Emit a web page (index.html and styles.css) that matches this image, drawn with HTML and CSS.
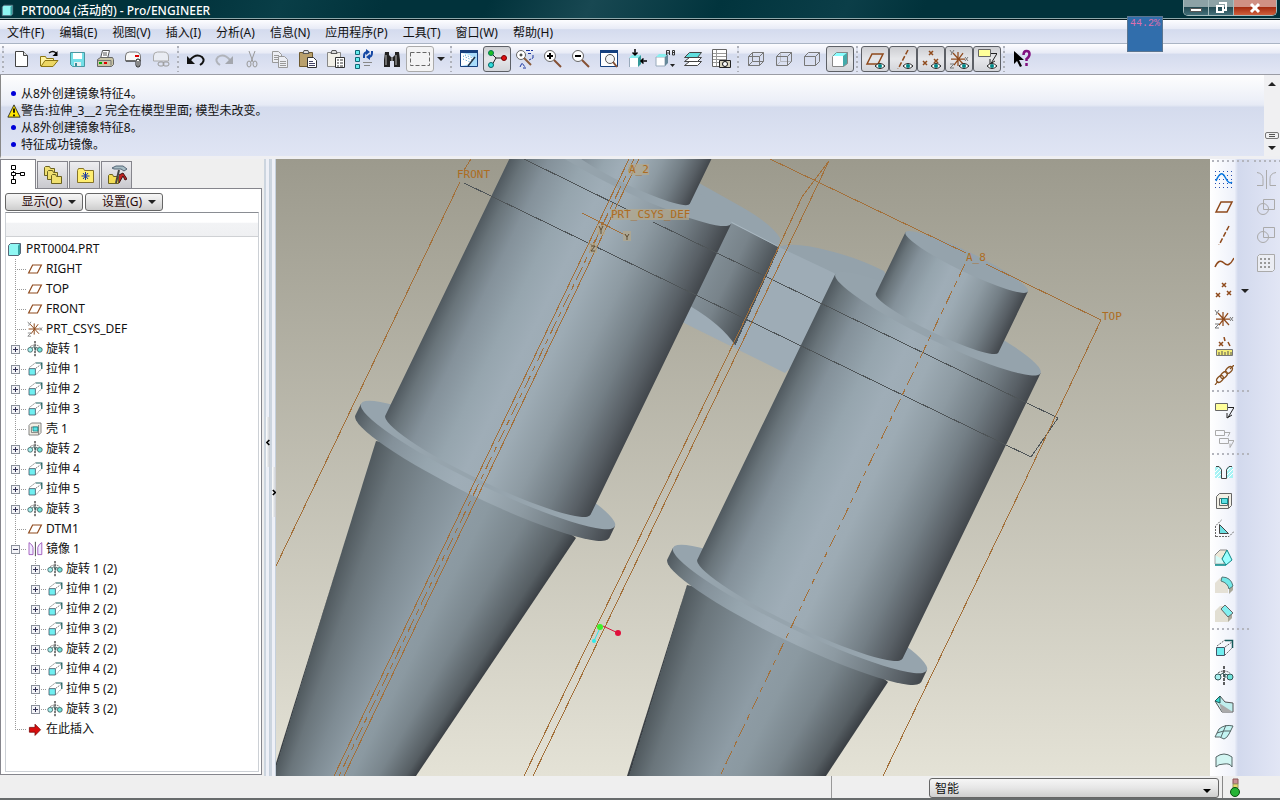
FILE: index.html
```html
<!DOCTYPE html>
<html lang="zh-CN">
<head>
  <meta charset="UTF-8">
  <meta name="viewport" content="width=device-width, initial-scale=1.0">
  <title>PRT0004 (活动的) - Pro/ENGINEER</title>
  <link rel="stylesheet" href="styles.css">
</head>
<body>

  <!-- 图标库 -->
  <svg class="sprite" aria-hidden="true">
    <symbol id="i-new" viewBox="0 0 20 20"><path d="M4.500 2.500h8l4 4v11h-12z" fill="#fff" stroke="#444"/><path d="M12.500 2.500v4h4" fill="#ddd" stroke="#444"/></symbol>
    <symbol id="i-open" viewBox="0 0 20 20"><path d="M1.500 17V7.500h5l1 2h7v3" fill="#fff3a0" stroke="#8b7512"/><path d="M2 17.500l4-6h13l-5 6z" fill="#ecd662" stroke="#8b7512"/><path d="M10 4q4-3 7 0" fill="none" stroke="#111" stroke-width="1.500"/><path d="M18.500 2v5h-5z"/></symbol>
    <symbol id="i-save" viewBox="0 0 20 20"><path d="M3.500 3.500h14v14h-12l-2-2z" fill="#74dfe8" stroke="#4a97a0"/><path d="M6 4h9v6H6z" fill="#fff"/><path d="M7 13h7v4H7z" fill="#e8eef0"/><path d="M8 14h2v3H8z" fill="#3a8b98"/></symbol>
    <symbol id="i-print" viewBox="0 0 20 20"><path d="M7.500 1.500h7l-2 8h-7z" fill="#fff" stroke="#555"/><path d="M8 4h4M8 6h4" stroke="#555"/><path d="M2.500 10.500l3-2h12l1 2v5l-2 2h-14z" fill="#c9c4a5" stroke="#666"/><path d="M3 11.500h13v5" fill="none" stroke="#777"/><path d="M4 14h3" stroke="#0a0" stroke-width="2"/><path d="M9 14h3" stroke="#d00" stroke-width="2"/></symbol>
    <symbol id="i-mail" viewBox="0 0 20 20"><path d="M2.500 12V7q0-4 4-4h6q5 0 5 5v4z" fill="#f8f8f8" stroke="#777"/><path d="M3 12h9" stroke="#222"/><path d="M12 7h4" stroke="#d00" stroke-width="2"/><rect x="13" y="10" width="4" height="8" rx="2" fill="#fff" stroke="#111"/><path d="M15 12v5" stroke="#111"/></symbol>
    <symbol id="i-maillink" viewBox="0 0 20 20"><path d="M2.500 12V7q0-4 4-4h6q5 0 5 5v4z" fill="#e9ecf3" stroke="#aaa"/><rect x="7" y="13" width="6" height="4" rx="2" fill="none" stroke="#999"/><rect x="12" y="13" width="6" height="4" rx="2" fill="none" stroke="#999"/></symbol>
    <symbol id="i-undo" viewBox="0 0 20 20"><path d="M4 11q6-7 12-3 4 4-2 8" fill="none" stroke="#111" stroke-width="2"/><path d="M1 7v8h8z" fill="#111"/></symbol>
    <symbol id="i-redo" viewBox="0 0 20 20"><path d="M16 11Q10 4 4 8q-4 4 2 8" fill="none" stroke="#b0b3ba" stroke-width="2"/><path d="M19 7v8h-8z" fill="#a4a7ae"/></symbol>
    <symbol id="i-cut" viewBox="0 0 20 20" fill="none" stroke="#999"><path d="M7 2l4 11M13 2L9 13"/><ellipse cx="7" cy="15" rx="2" ry="3"/><ellipse cx="13" cy="15" rx="2" ry="3"/></symbol>
    <symbol id="i-copy" viewBox="0 0 20 20" fill="#eceef4" stroke="#999"><path d="M2.500 2.500h6l3 3v8h-9z"/><path d="M8.500 7.500h6l3 3v8h-9z"/><path d="M4 6.500h5M4 8.500h4M4 10.500h4M10 12.500h6M10 14.500h6M10 16.500h6"/></symbol>
    <symbol id="i-paste" viewBox="0 0 20 20"><path d="M1.500 3.500h13v14h-13z" fill="#b9a06c" stroke="#6e5a30"/><path d="M5 4.500l1-3h4l1 3z" fill="#ddd" stroke="#555"/><path d="M9.500 8.500h6l3 3v7h-9z" fill="#fff" stroke="#333"/><path d="M11 12.500h4M11 14.500h6M11 16.500h6" stroke="#446"/></symbol>
    <symbol id="i-pastesp" viewBox="0 0 20 20"><path d="M1.500 3.500h13v14h-13z" fill="#f2f0e8" stroke="#888"/><path d="M5 4.500l1-3h4l1 3z" fill="#ddd" stroke="#555"/><path d="M9.500 8.500h9v10h-9z" fill="#fff" stroke="#333"/><path d="M11 11h2M11 14h2M11 17h2M14 11h3M14 14h3M14 17h3" stroke="#333"/></symbol>
    <symbol id="i-regen" viewBox="0 0 20 20"><path d="M1.500 1.500h4v4h-4zM1.500 8.500h4v4h-4zM1.500 15.500h4v4h-4z" fill="#6ee" stroke="#167"/><path d="M10 9V7q0-4 4-4M18 2v2q0 4-4 4" fill="none" stroke="#1548a5" stroke-width="2"/><path d="M12 0l4 3-4 3zM16 5l-4 3 4 3z" fill="#1548a5"/><path d="M9 13.500h9M10 16.500h6" stroke="#888"/></symbol>
    <symbol id="i-find" viewBox="0 0 20 20"><path d="M3 3h4v3l2 2h2l2-2V3h4l1 8v7h-6v-6H8v6H2v-7z" fill="#222"/><path d="M4 6v10M14 6v10" stroke="#bbb"/><path d="M9 8h2v4H9z" fill="#777"/></symbol>
    <symbol id="i-select" viewBox="0 0 20 20"><path d="M.5 3.500h19v13H.5z" fill="none" stroke="#666" stroke-dasharray="4 2"/></symbol>
    <symbol id="i-repaint" viewBox="0 0 20 20"><path d="M1.500 1.500h17v16h-17z" fill="#a9dcfb" stroke="#16407e"/><path d="M1 1h18v3H1z" fill="#16407e"/><path d="M2 4q10 1 13 6l-4 5-9 2z" fill="#fff"/><path d="M4 7l9 4M4 10l7 3M6 6l8 3" stroke="#2d8cc8" stroke-dasharray="1 2"/><path d="M9 17l7-9" stroke="#234" stroke-width="1.500"/></symbol>
    <symbol id="i-spin" viewBox="0 0 20 20"><path d="M4 4l5 5-4 7M9 9h9" fill="none" stroke="#222"/><circle cx="4" cy="4" r="2.500" fill="#1fbf1f" stroke="#075"/><circle cx="17" cy="9" r="2.500" fill="#e01010" stroke="#700"/><circle cx="4" cy="16" r="2.500" fill="#3dd" stroke="#066"/></symbol>
    <symbol id="i-orient" viewBox="0 0 20 20"><circle cx="6" cy="6" r="4.500" fill="#fff" stroke="#666"/><path d="M4.500 6h3M6 4.500v3" stroke="#111"/><path d="M9 9l7 7" stroke="#8a5a3a" stroke-width="2"/><path d="M11 1.500h7M13 4.500h3M18 6v3l-4 2M5 18l2-4 3 4M8 19h3" fill="none" stroke="#1c36a0" stroke-dasharray="4 1"/></symbol>
    <symbol id="i-zoomin" viewBox="0 0 20 20"><circle cx="7" cy="7" r="5.500" fill="#fff" stroke="#666"/><path d="M4 7h6M7 4v6" stroke="#000" stroke-width="2"/><path d="M11 11l7 7" stroke="#855033" stroke-width="2"/></symbol>
    <symbol id="i-zoomout" viewBox="0 0 20 20"><circle cx="7" cy="7" r="5.500" fill="#fff" stroke="#666"/><path d="M4 7h6" stroke="#000" stroke-width="2"/><path d="M11 11l7 7" stroke="#855033" stroke-width="2"/></symbol>
    <symbol id="i-refit" viewBox="0 0 20 20"><path d="M1.500 1.500h17v16h-17z" fill="#fff" stroke="#16407e"/><path d="M1 1h18v3H1z" fill="#16407e"/><circle cx="11" cy="10" r="4.500" fill="#f5f5f5" stroke="#555"/><path d="M14 13l4 5" stroke="#855033" stroke-width="2"/></symbol>
    <symbol id="i-reorient" viewBox="0 0 20 20"><path d="M2 9h9v9H2z" fill="#fff"/><path d="M2 9l3-3h9l-3 3z" fill="#8ee"/><path d="M11 9l3-3v9l-3 3z" fill="#399"/><path d="M2.500 18V9" stroke="#9ab"/><path d="M8 0v6M5.500 3.500L8 6l2.500-2.500M20 12h-6M16.500 9.500L14 12l2.500 2.500" fill="none" stroke="#000" stroke-width="1.500"/></symbol>
    <symbol id="i-views" viewBox="0 0 20 20"><path d="M1 8h9v9H1z" fill="#fff" stroke="#9ab"/><path d="M1 8l3-3h9l-3 3z" fill="#8ee"/><path d="M10 8l3-3v9l-3 3z" fill="#689"/><path d="M11.500 6V1.500h3V6M11.500 4h3M17.500 6V1.500h2V6h-2M17.500 3.500h2" fill="none" stroke="#333"/><path d="M15 15h5l-2.500 3z" fill="#222"/></symbol>
    <symbol id="i-layers" viewBox="0 0 20 20" stroke="#444"><path d="M1.500 16.500l5-4h12l-4 4z" fill="#fff"/><path d="M1.500 12.500l5-4h12l-4 4z" fill="#fff"/><path d="M1.500 8.500l5-5h12l-4 5z" fill="#5fdede"/></symbol>
    <symbol id="i-viewmgr" viewBox="0 0 20 20"><path d="M1.500 .5h14v17h-14z" fill="#fff" stroke="#666"/><path d="M2 4.500h13M2 7.500h13M2 10.500h13M2 13.500h13M5.500 1v16" stroke="#999"/><path d="M8.500 11.500h11v7h-11z" fill="#d7d2bd" stroke="#222"/><circle cx="14" cy="15" r="2.500" fill="#fff" stroke="#111"/></symbol>
    <symbol id="i-wire" viewBox="0 0 20 20" fill="none" stroke="#777"><path d="M2.500 7.500h11v9h-11zM6.500 3.500h11v9h-11zM2.500 7.500l4-4M13.500 7.500l4-4M2.500 16.500l4-4M13.500 16.500l4-4"/></symbol>
    <symbol id="i-hidden" viewBox="0 0 20 20" fill="none" stroke="#777"><path d="M6.500 3.500v9h11M2.500 16.500l4-4" stroke="#b5b8c0"/><path d="M2.500 7.500h11v9h-11zM2.500 7.500l4-4h11v9l-4 4M13.500 7.500l4-4"/></symbol>
    <symbol id="i-nohid" viewBox="0 0 20 20" fill="none" stroke="#777"><path d="M2.500 7.500h11v9h-11zM2.500 7.500l4-4h11v9l-4 4M13.500 7.500l4-4"/></symbol>
    <symbol id="i-part" viewBox="0 0 20 20"><path d="M2 7h11v11H2z" fill="#fff"/><path d="M2 7l4-4h12l-5 4z" fill="#8ff"/><path d="M13 7l5-4v11l-5 4z" fill="#4aa"/><path d="M2.500 7.500l4-4h11v11l-4 3h-11z" fill="none" stroke="#888"/></symbol>
    <symbol id="i-root" viewBox="0 0 16 16"><path d="M2.500 4.500l2-2h10v10l-2 2h-10z" fill="#8ff7f3" stroke="#567"/><path d="M12 4.500l2-2v10l-2 2z" fill="#36a0a0"/></symbol>
    <symbol id="i-eye" viewBox="0 0 10 6"><path d="M0 3q5-5 10 0-5 5-10 0z" fill="#fff" stroke="#222"/><circle cx="5" cy="3" r="2" fill="#088"/></symbol>
    <symbol id="i-plane" viewBox="0 0 20 20"><path d="M2 15L7 5h11l-5 10z" fill="none" stroke="#8f4a1c" stroke-width="1.500"/></symbol>
    <symbol id="i-axis" viewBox="0 0 20 20"><path d="M15 1L5 20" stroke="#8f4a1c" stroke-width="1.500" stroke-dasharray="5 2"/></symbol>
    <symbol id="i-points" viewBox="0 0 20 20"><path d="M8 2l4 4M12 2L8 6M2 12l4 4M6 12l-4 4M13 10l4 4M17 10l-4 4" stroke="#8f4a1c" stroke-width="1.500"/></symbol>
    <symbol id="i-csys" viewBox="0 0 20 20" fill="none"><path d="M9 3v14M2 10h14M4 4l11 12M14 4L5 16" stroke="#8f4a1c" stroke-width="1.250"/><path d="M1 1l2 3 2-3M3 4L2 6M16 8l3 4M19 8l-3 4M1 15h4l-4 4h4" stroke="#777"/></symbol>
    <symbol id="i-note" viewBox="0 0 20 20"><path d="M1.500 3.500h12v7h-12z" fill="#ffff9a" stroke="#666"/><path d="M14 7.500h6l-6 10M13 13v5l5-3" fill="none" stroke="#222"/></symbol>
    <symbol id="i-notes" viewBox="0 0 20 20"><path d="M1.500 2.500h9v5h-9zM5.500 10.500h9v5h-9zM11 4.500h5l-2 4M15 12.500h5l-4 7v-4" fill="none" stroke="#aaa"/></symbol>
    <symbol id="i-help" viewBox="0 0 20 20"><path d="M2 2v13l3-3 3 6 2-1-3-6h5z"/><path d="M11.500 6q0-4 3-4t3 3-3 5v2M14.500 14v3" fill="none" stroke="#80107f" stroke-width="2.500"/></symbol>
    <symbol id="i-sketch" viewBox="0 0 20 20"><path d="M1 2.500h18M1 6.500h18M1 10.500h18M1 14.500h18M1 18.500h18" stroke="#2850b0" stroke-dasharray="1 3"/><path d="M2 12Q7 0 11 8t7 5" fill="none" stroke="#0a78e0" stroke-width="1.500"/></symbol>
    <symbol id="i-curve" viewBox="0 0 20 20"><path d="M1 14Q5 5 10 10t10-5" fill="none" stroke="#8f4a1c" stroke-width="1.500"/></symbol>
    <symbol id="i-ruler" viewBox="0 0 20 20"><path d="M5 5l4 4M9 5L5 9M10 0l1 4M14 5l2 4" stroke="#8f4a1c" stroke-width="1.500"/><path d="M2.500 12.500h16v6h-16z" fill="#f4ee78" stroke="#777"/><path d="M5 18v-3M8 18v-4M11 18v-3M14 18v-4M17 18v-3" stroke="#555"/></symbol>
    <symbol id="i-chain" viewBox="0 0 20 20" fill="none" stroke="#87501f" stroke-width="1.250"><path d="M1 20l3-4M16 4l4-4"/><ellipse cx="6" cy="14" rx="4" ry="2.500" transform="rotate(-45 6 14)"/><ellipse cx="10" cy="10" rx="4" ry="2.500" transform="rotate(-45 10 10)"/><ellipse cx="15" cy="5" rx="4" ry="2.500" transform="rotate(-45 15 5)"/></symbol>
    <symbol id="i-hole" viewBox="0 0 20 20"><path d="M1 4h5l2 3v8H1zM19 4h-5l-2 3v8h7z" fill="#a8f3f5"/><path d="M1 9l5-5M1 13l6-6M3 15l4-4M13 8l4-4M13 12l6-6M14 15l5-5" stroke="#fff"/><path d="M2 3.500h3l2.500 3v9h5v-9l2.500-3h3" fill="none" stroke="#444"/></symbol>
    <symbol id="i-shell" viewBox="0 0 20 20"><path d="M2.500 5.500l3-3h12v12l-3 3h-12z" fill="#f2f0e6" stroke="#666"/><path d="M5.500 7.500h8v7h-8zM14.500 5v12" fill="none" stroke="#666"/><path d="M7.500 7.500h6v5h-6z" fill="#5de0e4" stroke="#188"/></symbol>
    <symbol id="i-rib" viewBox="0 0 20 20"><path d="M1.500 18V7l6-6M2 17.500h13l5-5" fill="none" stroke="#666" stroke-dasharray="2 1"/><path d="M5.500 5.500l9 9h-9z" fill="#6cdfe2" stroke="#444"/></symbol>
    <symbol id="i-draft" viewBox="0 0 20 20"><path d="M1 8h9v9H1z" fill="#d5fbf8" stroke="#aaa"/><path d="M1 8l5-5h7l-5 9" fill="#eee8d8" stroke="#888"/><path d="M8 12l5-9 5 10-6 5z" fill="#9ff" stroke="#188"/><path d="M1 18h11" stroke="#088" stroke-width="1.500"/></symbol>
    <symbol id="i-round" viewBox="0 0 20 20"><path d="M1 8l5-5h6l7 9v3l-4 3V14H14v4H1z" fill="#e5e1d6"/><path d="M15 13l4-2v4l-4 4z" fill="#aaa899"/><path d="M8 2q9 0 11 9l-4 3q-1-6-8-8z" fill="#72e8e8" stroke="#577"/></symbol>
    <symbol id="i-chamfer" viewBox="0 0 20 20"><path d="M1 8l5-5h5l7 8v4l-4 4H1z" fill="#e2dfd3"/><path d="M14 13l4-3v5l-4 4z" fill="#aaa899"/><path d="M7 6l4-4 8 8-5 4z" fill="#82eff0" stroke="#666"/></symbol>
    <symbol id="i-extrude" viewBox="0 0 20 20"><path d="M2.500 9.500h8v8h-8z" fill="#70eef0" stroke="#456"/><path d="M3 8l8-6M11 9l7-5M11 17l7-7" stroke="#666" stroke-dasharray="2 1"/><path d="M11 2.500h7.500V10" fill="none" stroke="#145a5a" stroke-width="1.500"/></symbol>
    <symbol id="i-revolve" viewBox="0 0 20 20"><path d="M10 0v20" stroke="#000" stroke-width="1.250" stroke-dasharray="3 1"/><path d="M4 7q6-4 12 0" fill="none" stroke="#555" stroke-dasharray="2 1"/><path d="M6 9l3-2 2 4M14 9l-3-1v4" fill="none" stroke="#355"/><circle cx="4" cy="11" r="3" fill="#a6f0f0" stroke="#355"/><circle cx="16" cy="11" r="3" fill="#70e4dc" stroke="#355"/></symbol>
    <symbol id="i-sweep" viewBox="0 0 20 20"><path d="M1 7l5-5 5 6 8 1v9H8z" fill="#bfeeed" stroke="#555"/><path d="M1 7l5-5v7z" fill="#36dbd0" stroke="#255"/><path d="M5 9l14 9H8z" fill="#aaa"/></symbol>
    <symbol id="i-bound" viewBox="0 0 20 20"><path d="M1 15L5 7q6-5 14-3l-4 8q-2 4-5 5-4-3-9-2z" fill="#c3f3f2" stroke="#566"/><path d="M3 11q6-3 14-2M12 3L7 15" fill="none" stroke="#566"/></symbol>
    <symbol id="i-surf" viewBox="0 0 20 20"><path d="M2 17V7q8-6 16 0v10q-2-4-8-3-6 0-8 3z" fill="#d2f5f2" stroke="#566"/></symbol>
    <symbol id="i-mirror" viewBox="0 0 20 20" fill="none"><path d="M10.500 1v18" stroke="#222"/><path d="M2.500 2v15h5V8q-1-4-5-6zM18.500 2v15h-5V8q1-4 5-6z" fill="#f0ecff" stroke="#9444b4"/></symbol>
    <symbol id="i-mirrorg" viewBox="0 0 20 20" fill="none" stroke="#aaa"><path d="M10.500 1v19M1 3.500q6 1 6 6v7H1M20 3.500q-6 1-6 6v7h6"/></symbol>
    <symbol id="i-merge" viewBox="0 0 20 20" fill="none" stroke="#aaa"><circle cx="7" cy="12" r="5.500"/><path d="M7.500 2.500h11v10h-11z"/></symbol>
    <symbol id="i-pattern" viewBox="0 0 20 20"><path d="M1.500 3.500l2-2h15v15l-2 2h-15z" fill="#ebedf3" stroke="#aaa"/><path d="M4 6h11M4 10h11M4 14h11" stroke="#999" stroke-width="2" stroke-dasharray="2 2"/></symbol>
    <symbol id="i-arrow" viewBox="0 0 20 20"><path d="M3 8h7V4l7 7-7 7v-4H3z" fill="#d80d0d" stroke="#7a0808"/></symbol>
    <symbol id="i-tree" viewBox="0 0 20 20" fill="#fff" stroke="#000"><path d="M5.500 6v8M7 8.500h7"/><path d="M3.500 .5h4v4h-4zM3.500 7.500h4v3h-4zM3.500 14.500h4v4h-4zM12.500 7.500h4v3h-4z"/></symbol>
    <symbol id="i-folders" viewBox="0 0 20 20" fill="#f0e070" stroke="#6b6220"><path d="M1.500 2.500l1-1h4l1 2h4v7h-10z"/><path d="M4.500 6.500l1-1h4l1 2h4v7h-10z"/><path d="M8.500 10.500l1-1h3l1 2h5v7h-10z"/></symbol>
    <symbol id="i-fav" viewBox="0 0 20 20"><path d="M2.500 5.500l1-2h5l1 2h9v12h-16z" fill="#ffee70" stroke="#857328"/><path d="M10.500 7v8M6.500 11h8M8 8l5 6M13 8l-5 6" stroke="#1536a4"/></symbol>
    <symbol id="i-tools" viewBox="0 0 20 20"><path d="M1.500 10.500l1-1h3l1 2h5v7h-10z" fill="#f3dd55" stroke="#6b6220"/><path d="M5 3l4-2h7l4 3-3 2-3-2H7z" fill="#a7bcc4" stroke="#567"/><path d="M12 5L9 18" stroke="#444" stroke-width="2"/><path d="M12 10l4-2 4 6-2 1-2-4-4 7" fill="#c02020" stroke="#411"/></symbol>
  </svg>

  <header class="titlebar">
    <svg class="app-icon" viewBox="0 0 16 16"><use href="#i-root"/></svg>
    <h1>PRT0004 (活动的) - Pro/ENGINEER</h1>
    <div class="window-controls">
      <button aria-label="最小化"><svg viewBox="0 0 12 12"><path d="M.5 6.500h11v3H.5z" fill="#fff" stroke="#555"/></svg></button>
      <button aria-label="还原"><svg viewBox="0 0 12 12"><path d="M4 1h7v7H9M2 4h6v6H2z" fill="none" stroke="#fff" stroke-width="2"/></svg></button>
      <button class="close" aria-label="关闭"><svg viewBox="0 0 12 12"><path d="M2 2l8 8M10 2l-8 8" stroke="#fff" stroke-width="3"/></svg></button>
    </div>
    <div class="progress">44.2%</div>
  </header>

  <nav class="menubar">
    <button>文件(F)</button>
    <button>编辑(E)</button>
    <button>视图(V)</button>
    <button>插入(I)</button>
    <button>分析(A)</button>
    <button>信息(N)</button>
    <button>应用程序(P)</button>
    <button>工具(T)</button>
    <button>窗口(W)</button>
    <button>帮助(H)</button>
  </nav>

  <div class="toolbar">
    <i class="grip"></i>
    <button aria-label="新建"><svg><use href="#i-new"/></svg></button>
    <button aria-label="打开"><svg><use href="#i-open"/></svg></button>
    <button aria-label="保存"><svg><use href="#i-save"/></svg></button>
    <button aria-label="打印"><svg><use href="#i-print"/></svg></button>
    <button aria-label="发送邮件"><svg><use href="#i-mail"/></svg></button>
    <button aria-label="发送链接"><svg><use href="#i-maillink"/></svg></button>
    <i class="grip"></i>
    <button aria-label="撤消"><svg><use href="#i-undo"/></svg></button>
    <button aria-label="重做"><svg><use href="#i-redo"/></svg></button>
    <button aria-label="剪切"><svg><use href="#i-cut"/></svg></button>
    <button aria-label="复制"><svg><use href="#i-copy"/></svg></button>
    <button aria-label="粘贴"><svg><use href="#i-paste"/></svg></button>
    <button aria-label="选择性粘贴"><svg><use href="#i-pastesp"/></svg></button>
    <button aria-label="再生"><svg><use href="#i-regen"/></svg></button>
    <button aria-label="查找"><svg><use href="#i-find"/></svg></button>
    <button class="framed" aria-label="选取框"><svg><use href="#i-select"/></svg></button>
    <button class="more" aria-label="更多选取"><span class="caret"></span></button>
    <i class="grip"></i>
    <button aria-label="重画"><svg><use href="#i-repaint"/></svg></button>
    <button class="pressed" aria-label="旋转中心"><svg><use href="#i-spin"/></svg></button>
    <button aria-label="定向模式"><svg><use href="#i-orient"/></svg></button>
    <button aria-label="放大"><svg><use href="#i-zoomin"/></svg></button>
    <button aria-label="缩小"><svg><use href="#i-zoomout"/></svg></button>
    <button aria-label="重新调整"><svg><use href="#i-refit"/></svg></button>
    <button aria-label="重定向"><svg><use href="#i-reorient"/></svg></button>
    <button aria-label="视图列表"><svg><use href="#i-views"/></svg></button>
    <button aria-label="层"><svg><use href="#i-layers"/></svg></button>
    <button aria-label="视图管理器"><svg><use href="#i-viewmgr"/></svg></button>
    <i class="grip"></i>
    <button aria-label="线框"><svg><use href="#i-wire"/></svg></button>
    <button aria-label="隐藏线"><svg><use href="#i-hidden"/></svg></button>
    <button aria-label="无隐藏线"><svg><use href="#i-nohid"/></svg></button>
    <button class="pressed" aria-label="着色"><svg><use href="#i-part"/></svg></button>
    <i class="grip"></i>
    <button class="pressed" aria-label="显示平面"><svg><use href="#i-plane"/><use href="#i-eye" x="10" y="14" width="10" height="6"/></svg></button>
    <button class="pressed" aria-label="显示轴"><svg><use href="#i-axis"/><use href="#i-eye" x="10" y="14" width="10" height="6"/></svg></button>
    <button class="pressed" aria-label="显示点"><svg><use href="#i-points"/><use href="#i-eye" x="10" y="14" width="10" height="6"/></svg></button>
    <button class="pressed" aria-label="显示坐标系"><svg><use href="#i-csys"/><use href="#i-eye" x="10" y="14" width="10" height="6"/></svg></button>
    <button class="pressed" aria-label="显示注释"><svg><use href="#i-note" y="-3"/><use href="#i-eye" x="10" y="14" width="10" height="6"/></svg></button>
    <i class="grip"></i>
    <button aria-label="帮助"><svg><use href="#i-help"/></svg></button>
  </div>

  <section class="messages">
    <ul>
      <li>从8外创建镜象特征4。</li>
      <li class="warn"><svg viewBox="0 0 16 16"><path d="M8 1l7 14H1z" fill="#ffe600" stroke="#222"/><path d="M8 5v5M8 12v2" stroke="#000" stroke-width="2"/></svg>警告:拉伸_3__2 完全在模型里面; 模型未改变。</li>
      <li>从8外创建镜象特征8。</li>
      <li>特征成功镜像。</li>
    </ul>
    <div class="scroll">
      <button aria-label="向上滚动"><span class="caret up"></span></button>
      <i class="thumb"></i>
      <button aria-label="向下滚动"><span class="caret"></span></button>
    </div>
  </section>

  <main>
    <aside class="navigator">
      <div class="tabs">
        <button class="active" aria-label="模型树"><svg><use href="#i-tree"/></svg></button>
        <button aria-label="文件夹浏览器"><svg><use href="#i-folders"/></svg></button>
        <button aria-label="收藏夹"><svg><use href="#i-fav"/></svg></button>
        <button aria-label="工具"><svg><use href="#i-tools"/></svg></button>
      </div>
      <div class="panel">
        <div class="panel-buttons">
          <button>显示(O)<span class="caret"></span></button>
          <button>设置(G)<span class="caret"></span></button>
        </div>
        <div class="tree">
          <div class="tree-head"></div>
          <div class="root"><svg><use href="#i-root"/></svg>PRT0004.PRT</div>
          <ul>
            <li><div class="row"><svg><use href="#i-plane"/></svg>RIGHT</div></li>
            <li><div class="row"><svg><use href="#i-plane"/></svg>TOP</div></li>
            <li><div class="row"><svg><use href="#i-plane"/></svg>FRONT</div></li>
            <li><div class="row"><svg><use href="#i-csys"/></svg>PRT_CSYS_DEF</div></li>
            <li><div class="row"><button class="expander" aria-label="展开"></button><svg><use href="#i-revolve"/></svg>旋转 1</div></li>
            <li><div class="row"><button class="expander" aria-label="展开"></button><svg><use href="#i-extrude"/></svg>拉伸 1</div></li>
            <li><div class="row"><button class="expander" aria-label="展开"></button><svg><use href="#i-extrude"/></svg>拉伸 2</div></li>
            <li><div class="row"><button class="expander" aria-label="展开"></button><svg><use href="#i-extrude"/></svg>拉伸 3</div></li>
            <li><div class="row"><svg><use href="#i-shell"/></svg>壳 1</div></li>
            <li><div class="row"><button class="expander" aria-label="展开"></button><svg><use href="#i-revolve"/></svg>旋转 2</div></li>
            <li><div class="row"><button class="expander" aria-label="展开"></button><svg><use href="#i-extrude"/></svg>拉伸 4</div></li>
            <li><div class="row"><button class="expander" aria-label="展开"></button><svg><use href="#i-extrude"/></svg>拉伸 5</div></li>
            <li><div class="row"><button class="expander" aria-label="展开"></button><svg><use href="#i-revolve"/></svg>旋转 3</div></li>
            <li><div class="row"><svg><use href="#i-plane"/></svg>DTM1</div></li>
            <li>
              <div class="row"><button class="expander open" aria-label="折叠"></button><svg><use href="#i-mirror"/></svg>镜像 1</div>
              <ul>
                <li><div class="row"><button class="expander" aria-label="展开"></button><svg><use href="#i-revolve"/></svg>旋转 1 (2)</div></li>
                <li><div class="row"><button class="expander" aria-label="展开"></button><svg><use href="#i-extrude"/></svg>拉伸 1 (2)</div></li>
                <li><div class="row"><button class="expander" aria-label="展开"></button><svg><use href="#i-extrude"/></svg>拉伸 2 (2)</div></li>
                <li><div class="row"><button class="expander" aria-label="展开"></button><svg><use href="#i-extrude"/></svg>拉伸 3 (2)</div></li>
                <li><div class="row"><button class="expander" aria-label="展开"></button><svg><use href="#i-revolve"/></svg>旋转 2 (2)</div></li>
                <li><div class="row"><button class="expander" aria-label="展开"></button><svg><use href="#i-extrude"/></svg>拉伸 4 (2)</div></li>
                <li><div class="row"><button class="expander" aria-label="展开"></button><svg><use href="#i-extrude"/></svg>拉伸 5 (2)</div></li>
                <li><div class="row"><button class="expander" aria-label="展开"></button><svg><use href="#i-revolve"/></svg>旋转 3 (2)</div></li>
              </ul>
            </li>
            <li><div class="row"><svg><use href="#i-arrow"/></svg>在此插入</div></li>
          </ul>
        </div>
      </div>
    </aside>

    <div class="splitter"><button aria-label="收起导航器"><svg viewBox="0 0 6 8"><path d="M4 1L1 4l3 3" fill="none" stroke="#000" stroke-width="2"/></svg></button></div>
    <div class="splitter right"><button aria-label="展开浏览器"><svg viewBox="0 0 6 8"><path d="M1 1l3 3-3 3" fill="none" stroke="#000" stroke-width="2"/></svg></button></div>

    <svg class="viewport" viewBox="276 159 934 617" preserveAspectRatio="xMidYMid slice">
      <defs>
        <linearGradient id="sky" x2="0" y2="1"><stop stop-color="#9c9a8d"/><stop offset="1" stop-color="#e4e2d6"/></linearGradient>
        <linearGradient id="metal">
          <stop stop-color="#50595f"/><stop offset=".06" stop-color="#69747a"/><stop offset=".16" stop-color="#84919a"/>
          <stop offset=".3" stop-color="#96a5ae"/><stop offset=".42" stop-color="#9fadb7"/><stop offset=".54" stop-color="#9dabb4"/>
          <stop offset=".68" stop-color="#8d9aa2"/><stop offset=".82" stop-color="#737e85"/><stop offset=".93" stop-color="#585f65"/><stop offset="1" stop-color="#42474c"/>
        </linearGradient>
        <linearGradient id="hub" gradientUnits="userSpaceOnUse" x1="700" y1="260" x2="760" y2="289"><stop stop-color="#87949c"/><stop offset=".5" stop-color="#78838a"/><stop offset="1" stop-color="#4b5257"/></linearGradient>
      </defs>
      <rect x="276" y="159" width="934" height="617" fill="url(#sky)"/>

      <!-- 锥体 -->
      <foreignObject x="276" y="159" width="934" height="617">
        <div class="cone cone-left"></div>
        <div class="cone cone-right"></div>
      </foreignObject>

      <!-- 连接板 -->
      <path d="M640 159L699 183L740 206Q772 224 780 238L779 247L700 225z" fill="#95a3ac"/>
      <path d="M779 247Q792 241 830 251Q858 258 884 271L900 300L840 300z" fill="#94a2ab"/>
      <path d="M779 247L834 273L860 300L785 373L680 321L693 300z" fill="#9eacb6"/>
      <path d="M731 223L779 247L735 345Q722 325 690 306z" fill="url(#hub)"/>
      <path d="M731 222L779 247" stroke="#aab8c1"/>

      <!-- 左筒 -->
      <g transform="translate(488 465) rotate(25.800)">
        <path d="M-141 0V13A140 21 0 0 0 141 13V0z" fill="url(#metal)"/>
        <ellipse rx="141" ry="21" fill="#96a4ad"/>
        <path d="M-114 -323V0A114 17 0 0 0 114 0V-323z" fill="url(#metal)"/>
        <ellipse cy="-323" rx="114" ry="17" fill="#95a3ac"/>
        <path d="M-68 -420V-323A68 10 0 0 0 68 -323V-420z" fill="url(#metal)"/>
      </g>

      <!-- 右筒 -->
      <g transform="translate(800 609) rotate(25.800)">
        <path d="M-141 0V13A140 21 0 0 0 141 13V0z" fill="url(#metal)"/>
        <ellipse rx="141" ry="21" fill="#96a4ad"/>
        <path d="M-114 -317V0A114 17 0 0 0 114 0V-317z" fill="url(#metal)"/>
        <ellipse cy="-317" rx="114" ry="17" fill="#95a3ac"/>
        <path d="M-69 -385V-317A68 10 0 0 0 67 -317V-385z" fill="url(#metal)"/>
        <ellipse cx="-1" cy="-385" rx="68" ry="10" fill="#95a3ac"/>
      </g>

      <g class="edges">
        <path d="M524 159L628 210M653 222L1058 418L1031 457L464 183"/>
        <path d="M779 247L735 345"/>
      </g>
      <g class="datums">
        <path d="M471 159L464 170M460 182L276 566"/>
        <path d="M629 159L334 776M639 159L344 776"/>
        <path d="M829 161L802 197L740 330L524 776M829 161L740 347L533 776"/>
        <path d="M770 159L966 253M986 264L1101 320L1023 485L883 776"/>
        <path d="M582 213L627 236M603 222L593 247"/>
        <path class="axis" d="M634 159L339 776M965 264L720 776"/>
      </g>
      <g class="tags">
        <rect x="628" y="164" width="21" height="11"/>
        <rect x="611" y="209" width="78" height="11"/>
        <rect x="597" y="225" width="8" height="10"/>
        <rect x="623" y="231" width="8" height="10"/>
        <rect x="589" y="243" width="8" height="10"/>
      </g>
      <g class="labels">
        <text x="457" y="178">FRONT</text>
        <text x="629" y="173">A_2</text>
        <text x="611" y="218">PRT_CSYS_DEF</text>
        <text x="966" y="261">A_8</text>
        <text x="1102" y="320">TOP</text>
      </g>
      <path d="M599 226l2 4 2-4M601 230v4M625 234l2 3 2-3M627 237v3M591 246h4l-4 5h4" fill="none" stroke="#5b4a30"/>

      <!-- 旋转中心 -->
      <path d="M603 626L618 633" stroke="#d4143c"/>
      <path d="M600 628L594 641" stroke="#33e6ea"/>
      <circle cx="600" cy="627" r="3" fill="#3ef02a"/>
      <circle cx="618" cy="633" r="3" fill="#e0103c"/>
      <circle cx="594" cy="641" r="2" fill="#2eecec"/>
    </svg>

    <aside class="features">
      <div class="col">
        <i class="grip"></i>
        <button aria-label="草绘"><svg><use href="#i-sketch"/></svg></button>
        <button aria-label="基准平面"><svg><use href="#i-plane"/></svg></button>
        <button aria-label="基准轴"><svg><use href="#i-axis"/></svg></button>
        <button aria-label="基准曲线"><svg><use href="#i-curve"/></svg></button>
        <div class="pair">
          <button aria-label="基准点"><svg><use href="#i-points"/></svg></button>
          <button class="more" aria-label="更多基准点"><span class="caret"></span></button>
        </div>
        <button aria-label="坐标系"><svg><use href="#i-csys"/></svg></button>
        <button aria-label="分析"><svg><use href="#i-ruler"/></svg></button>
        <button aria-label="参照"><svg><use href="#i-chain"/></svg></button>
        <i class="grip"></i>
        <button aria-label="注释"><svg><use href="#i-note"/></svg></button>
        <button aria-label="注释传播"><svg><use href="#i-notes"/></svg></button>
        <i class="grip"></i>
        <button aria-label="孔"><svg><use href="#i-hole"/></svg></button>
        <button aria-label="壳"><svg><use href="#i-shell"/></svg></button>
        <button aria-label="筋"><svg><use href="#i-rib"/></svg></button>
        <button aria-label="拔模"><svg><use href="#i-draft"/></svg></button>
        <button aria-label="倒圆角"><svg><use href="#i-round"/></svg></button>
        <button aria-label="倒角"><svg><use href="#i-chamfer"/></svg></button>
        <i class="grip"></i>
        <button aria-label="拉伸"><svg><use href="#i-extrude"/></svg></button>
        <button aria-label="旋转"><svg><use href="#i-revolve"/></svg></button>
        <button aria-label="扫描"><svg><use href="#i-sweep"/></svg></button>
        <button aria-label="边界混合"><svg><use href="#i-bound"/></svg></button>
        <button aria-label="造型"><svg><use href="#i-surf"/></svg></button>
      </div>
      <div class="col">
        <i class="grip"></i>
        <button aria-label="镜像"><svg><use href="#i-mirrorg"/></svg></button>
        <button aria-label="合并"><svg><use href="#i-merge"/></svg></button>
        <button aria-label="修剪"><svg><use href="#i-merge"/></svg></button>
        <button aria-label="阵列"><svg><use href="#i-pattern"/></svg></button>
      </div>
    </aside>
  </main>

  <footer class="statusbar">
    <div class="status-text"></div>
    <div class="status-filter">
      <select aria-label="选取过滤器"><option>智能</option></select>
      <span class="caret"></span>
    </div>
    <div class="signal">
      <svg viewBox="0 0 12 20"><path d="M4 1h5v5H4z" fill="#c98f96" stroke="#855"/><path d="M4 6h5v4H4z" fill="#e9d96a" stroke="#996"/><circle cx="6" cy="14" r="4.500" fill="#25b335" stroke="#084d12"/></svg>
    </div>
  </footer>

</body>
</html>
```
FILE: styles.css
```css
* {
  box-sizing: border-box;
}
body {
  margin: 0;
  height: 100vh;
  display: flex;
  flex-direction: column;
  overflow: hidden;
  background: #efefef;
  color: #111;
  font-family: "Noto Sans", "Noto Sans CJK SC", sans-serif;
  font-size: 12px;
}
button {
  margin: 0;
  padding: 0;
  border: 0;
  background: none;
  color: inherit;
  font: inherit;
}
ul {
  margin: 0;
  padding: 0;
  list-style: none;
}
svg {
  display: block;
  flex: none;
}
.sprite {
  position: absolute;
  width: 0;
  height: 0;
}
.caret {
  flex: none;
  border: 4px solid transparent;
  border-top-color: #222;
  border-bottom: 0;
}
.caret.up {
  border-top: 0;
  border-bottom: 4px solid #222;
}

/* 标题栏 */
.titlebar {
  position: relative;
  flex: none;
  height: 20px;
  display: flex;
  align-items: center;
  padding-right: 3px;
  border-bottom: 1px solid #06181c;
  box-shadow: inset 0 -1px #8fa8ab;
  background: linear-gradient(115deg, #01323b 0 14%, #093e47 22%, #01323b 30% 38%, #184852 46%, #01343d 56%, #0b3e48 66%, #01323b 72%);
}
.app-icon {
  width: 14px;
  height: 16px;
  margin-right: 7px;
}
.titlebar h1 {
  flex: 1;
  margin: 0;
  color: #fff;
  font-size: 12px;
  font-weight: 500;
}
.window-controls {
  align-self: flex-start;
  display: flex;
  height: 16px;
  border: 1px solid #a7bcbe;
  border-top: 0;
  border-radius: 0 0 5px 5px;
  overflow: hidden;
}
.window-controls button {
  width: 25px;
  display: flex;
  align-items: center;
  justify-content: center;
  border-right: 1px solid #a7bcbe;
  background: linear-gradient(#8da2a6 45%, #234a53 50%, #44707a);
}
.window-controls button.close {
  width: 42px;
  border: 0;
  background: linear-gradient(#d09084 45%, #a52c12 50%, #d0603c);
}
.window-controls svg {
  width: 12px;
  height: 12px;
}
.progress {
  position: absolute;
  top: 16px;
  right: 117px;
  z-index: 2;
  width: 36px;
  height: 36px;
  border: 1px solid #5b7590;
  background: #316eac;
  color: #dd6fae;
  font: 10px/14px "Liberation Mono", monospace;
  text-align: center;
}

/* 菜单和工具栏 */
.menubar {
  flex: none;
  height: 24px;
  display: flex;
  align-items: center;
  gap: 15px;
  padding-left: 7px;
  border-bottom: 1px solid #aab4c4;
  background: linear-gradient(#fdfdff, #e8ebf6 38%, #d4dbee 42%, #dfe4f3);
}
.toolbar {
  flex: none;
  height: 31px;
  display: flex;
  align-items: center;
  border-bottom: 1px solid #9a9ca4;
  background: linear-gradient(#fdfdff, #e8ebf6 30%, #d4dbee 34%, #e2e6f4);
}
.toolbar button,
.features button {
  flex: none;
  width: 28px;
  height: 28px;
  display: flex;
  align-items: center;
  justify-content: center;
}
.toolbar svg,
.features svg,
.tabs svg {
  width: 20px;
  height: 20px;
}
.toolbar .more,
.features .more {
  width: 14px;
}
.toolbar .pressed {
  height: 26px;
  border: 1px solid #5d6066;
  border-radius: 3px;
  background: linear-gradient(#cdced2, #e6e7ea 50%, #d3d5da);
}
.toolbar .framed {
  height: 26px;
  border: 1px solid #aaa;
  border-radius: 3px;
  background: #f3f3f4;
}
.grip {
  flex: none;
  width: 7px;
  height: 26px;
  background:
    linear-gradient(#aeb1ba 0 0) 2px 0 / 2px 2px no-repeat,
    repeating-linear-gradient(transparent 0 2px, #dfe3f0 2px 5px, transparent 5px) 2px 0 / 2px 100% no-repeat,
    linear-gradient(#aeb1ba 0 0) 2px 0 / 2px 100% no-repeat;
}

/* 消息区 */
.messages {
  flex: none;
  height: 84px;
  display: flex;
  border-bottom: 3px solid #efeff2;
  border-left: 1px solid #888;
  background: linear-gradient(#fefefe, #edf0f8 30%, #e6eaf5 37%, #d4dbed 40%, #e0e5f4);
}
.messages ul {
  flex: 1;
  padding: 10px 0 0 6px;
}
.messages li {
  height: 17px;
  display: flex;
  align-items: center;
  line-height: 17px;
}
.messages li::before {
  content: "";
  width: 5px;
  height: 5px;
  margin: 0 5px 0 4px;
  border-radius: 50%;
  background: #0000d8;
}
.messages .warn::before {
  display: none;
}
.messages svg {
  width: 14px;
  height: 16px;
}
.scroll {
  width: 16px;
  display: flex;
  flex-direction: column;
  align-items: center;
  background: #f0f0f2;
}
.scroll button {
  width: 16px;
  height: 17px;
  display: flex;
  align-items: center;
  justify-content: center;
}
.thumb {
  width: 14px;
  height: 7px;
  margin-top: auto;
  border: 1px solid #777;
  border-radius: 2px;
  background: repeating-linear-gradient(#eee 0 1px, #555 1px 2px) center / 6px 5px no-repeat;
}

main {
  flex: 1;
  min-height: 0;
  display: flex;
}

/* 模型树 */
.navigator {
  width: 264px;
  flex: none;
  display: flex;
  flex-direction: column;
  padding: 0 2px 1px 0;
}
.tabs {
  display: flex;
  align-items: flex-end;
  gap: 1px;
  height: 29px;
}
.tabs button {
  width: 31px;
  height: 27px;
  display: flex;
  align-items: center;
  justify-content: center;
  border: 1px solid #85858c;
  border-bottom: 0;
  background: linear-gradient(#ededf0, #c9c9ce);
}
.tabs .active {
  width: 36px;
  height: 30px;
  margin-bottom: -1px;
  position: relative;
  background: #fff;
}
.panel {
  flex: 1;
  display: flex;
  flex-direction: column;
  padding: 4px 2px 2px 4px;
  border: 1px solid #85858c;
  background: #fff;
}
.panel-buttons {
  display: flex;
  gap: 2px;
}
.panel-buttons button {
  width: 78px;
  height: 18px;
  display: flex;
  align-items: center;
  justify-content: flex-end;
  gap: 6px;
  padding-right: 6px;
  border: 1px solid #666;
  border-radius: 3px;
  background: linear-gradient(#f7f7f7, #e4e4e4 50%, #cdcdcd);
  color: #2a0808;
  line-height: 16px;
}
.tree {
  flex: 1;
  margin-top: 1px;
  border: 1px solid #ccd0d5;
  border-top-color: #8a8d93;
}
.tree-head {
  height: 24px;
  margin-bottom: 2px;
  border-bottom: 1px solid #cfd1d4;
  background: linear-gradient(#fff 40%, #f2f3f5 45%, #eff0f2);
}
.root,
.row {
  height: 20px;
  display: flex;
  align-items: center;
  gap: 3px;
  line-height: 20px;
}
.tree svg {
  width: 16px;
  height: 16px;
}
.root svg {
  margin-right: 1px;
}
.tree ul {
  background: repeating-linear-gradient(#999 0 1px, transparent 1px 2px) 9px 0 / 1px calc(100% - 10px) no-repeat;
}
.tree ul ul {
  margin-left: 20px;
}
.row {
  padding-left: 21px;
  background: repeating-linear-gradient(90deg, #999 0 1px, transparent 1px 2px) 9px 10px / 11px 1px no-repeat;
}
.row:has(.expander) {
  padding-left: 5px;
}
.expander {
  width: 9px;
  height: 9px;
  margin-right: 4px;
  border: 1px solid #8a8f9a;
  background:
    linear-gradient(#335 0 0) center / 5px 1px no-repeat,
    linear-gradient(#335 0 0) center / 1px 5px no-repeat,
    #f4f4f8;
}
.expander.open {
  background: linear-gradient(#335 0 0) center / 5px 1px no-repeat, #f4f4f8;
}

.splitter {
  width: 6px;
  flex: none;
  border-left: 2px solid #ccd5df;
  border-right: 1px solid #c5d0dc;
  background: #eef0f7;
}
.splitter button {
  width: 4px;
  height: 50px;
  margin-top: 258px;
  display: flex;
  align-items: center;
  justify-content: center;
  background: linear-gradient(90deg, #fff, #c6cad0);
}
.splitter.right button {
  margin-top: 308px;
}
.splitter svg {
  width: 5px;
  height: 7px;
}

/* 图形窗口 */
.viewport {
  flex: 1;
  min-width: 0;
  height: 100%;
}
.cone {
  position: absolute;
  inset: 0;
}
.cone-left {
  clip-path: polygon(100px 282px, 200px 300px, 300px 379px, 140px 617px, -4px 617px);
  background: conic-gradient(from 16.900deg at -120px 1003px, #50595e, #6a757b 2deg, #7e8b93 5deg, #8e9ca5 8deg, #8b99a1 10deg, #79858c 13deg, #565e63 16deg, #3c4146 17deg);
}
.cone-right {
  clip-path: polygon(411px 426px, 520px 450px, 612px 523px, 550px 617px, 351px 617px);
  background: conic-gradient(from 16.900deg at 192px 1147px, #50595e, #6a757b 2deg, #7e8b93 5deg, #8e9ca5 8deg, #8b99a1 10deg, #79858c 13deg, #565e63 16deg, #3c4146 17deg);
}
.edges {
  fill: none;
  stroke: #4f5558;
  shape-rendering: crispEdges;
}
.datums {
  fill: none;
  stroke: #a3703a;
  shape-rendering: crispEdges;
}
.axis {
  stroke-dasharray: 14 5 6 5;
}
.tags {
  fill: #b5a98c;
  opacity: 0.7;
}
.labels {
  fill: #ad6c22;
  font: 11px "DejaVu Sans Mono", monospace;
}

/* 特征工具栏 */
.features {
  flex: none;
  width: 70px;
  display: flex;
  justify-content: space-between;
  background: linear-gradient(90deg, #fff, #eef1fa 35%, #d2d9ed 40%, #e2e6f5);
}
.features .col {
  width: 28px;
}
.features .pair {
  display: flex;
}
.features .grip {
  display: block;
  width: 40px;
  height: 7px;
  background: repeating-linear-gradient(90deg, transparent 0 2px, #b3b5bd 2px 4px, transparent 4px 5px) 0 1px / 100% 2px no-repeat;
}
.features .grip:first-child {
  height: 6px;
}
.features .col:last-child .grip {
  width: 28px;
}

/* 状态栏 */
.statusbar {
  flex: none;
  height: 24px;
  display: flex;
  border-bottom: 2px solid #676b6c;
}
.status-text {
  width: 65%;
  border-right: 1px solid #999;
}
.status-filter {
  position: relative;
  flex: 1;
  display: flex;
  justify-content: flex-end;
  padding: 2px 3px 0 0;
  border-right: 1px solid #888;
}
.status-filter select {
  width: 290px;
  height: 20px;
  padding: 0 5px;
  appearance: none;
  border: 1px solid #666;
  border-radius: 3px;
  background: linear-gradient(#f6f6f6, #e6e6e6 50%, #cecece);
  color: #111;
  font: inherit;
}
.status-filter .caret {
  position: absolute;
  right: 11px;
  top: 13px;
  border-top-color: #000;
}
.signal {
  width: 57px;
  padding: 2px 0 0 6px;
}
.signal svg {
  width: 12px;
  height: 20px;
}
```
